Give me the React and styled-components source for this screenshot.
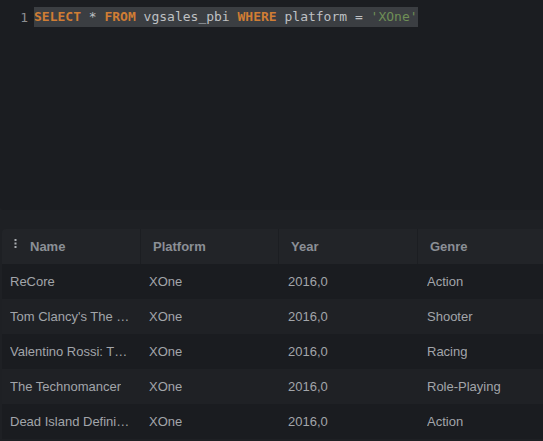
import React from 'react';
import styled, { createGlobalStyle } from 'styled-components';

const rows = [
  { name: 'ReCore', platform: 'XOne', year: '2016,0', genre: 'Action' },
  { name: "Tom Clancy's The Division", platform: 'XOne', year: '2016,0', genre: 'Shooter' },
  { name: 'Valentino Rossi: The Game', platform: 'XOne', year: '2016,0', genre: 'Racing' },
  { name: 'The Technomancer', platform: 'XOne', year: '2016,0', genre: 'Role-Playing' },
  { name: 'Dead Island Definitive Collection', platform: 'XOne', year: '2016,0', genre: 'Action' },
];

const GlobalStyle = createGlobalStyle`
  html, body {
    margin: 0;
    background: #1e2024;
    overflow: hidden;
  }
`;

const App = () => {
  return (
    <>
      <GlobalStyle />
      <Page>
        <Editor>
          <Line>
            <LineNo>1</LineNo>
            <Code>
              <Kw>SELECT</Kw> * <Kw>FROM</Kw> vgsales_pbi <Kw>WHERE</Kw> platform = <Str>'XOne'</Str>
            </Code>
          </Line>
        </Editor>
        <Results>
          <Table>
            <HeaderRow>
              <HeadCell $first>
                <Dots width="3" height="9" viewBox="0 0 3 9">
                  <rect x="0.5" y="0" width="2" height="2" fill="#a8abb0" />
                  <rect x="0.5" y="3.5" width="2" height="2" fill="#a8abb0" />
                  <rect x="0.5" y="7" width="2" height="2" fill="#a8abb0" />
                </Dots>
                Name
              </HeadCell>
              <HeadCell>Platform</HeadCell>
              <HeadCell>Year</HeadCell>
              <HeadCell $last>Genre</HeadCell>
            </HeaderRow>
            {rows.map((r, i) => (
              <Row key={i} $odd={i % 2 === 1}>
                <Cell><Text>{r.name}</Text></Cell>
                <Cell><Text>{r.platform}</Text></Cell>
                <Cell $pad={9}><Text>{r.year}</Text></Cell>
                <Cell $pad={9}><Text>{r.genre}</Text></Cell>
              </Row>
            ))}
          </Table>
        </Results>
      </Page>
    </>
  );
};

const Page = styled.div`
  width: 543px;
  height: 441px;
  display: flex;
  flex-direction: column;
  background: #1e2024;
`;

const Editor = styled.div`
  height: 203px;
  padding-top: 7px;
  background: #1b1d21;
  border-bottom-left-radius: 4px;
  font-family: 'DejaVu Sans Mono', monospace;
  font-size: 13px;
`;

const Line = styled.div`
  display: flex;
  align-items: center;
  height: 20px;
`;

const LineNo = styled.span`
  width: 28px;
  text-align: right;
  padding-right: 6px;
  color: #8b8d91;
`;

const Code = styled.span`
  background: #3b3e42;
  color: #bfc1c4;
  line-height: 20px;
  white-space: pre;
`;

const Kw = styled.span`
  color: #d07d34;
  font-weight: bold;
`;

const Str = styled.span`
  color: #6f8f56;
`;

const Results = styled.div`
  flex: 1;
  padding: 19px 0 0 2px;
`;

const Table = styled.div`
  font-family: 'Liberation Sans', Arial, sans-serif;
  font-size: 13px;
`;

const grid = `
  display: grid;
  grid-template-columns: 139px 138px 139px 1fr;
  height: 35px;
`;

const HeaderRow = styled.div`
  ${grid}
  background: #222428;
  border-top-left-radius: 4px;
`;

const HeadCell = styled.div`
  display: flex;
  align-items: center;
  gap: 13px;
  padding-left: 12px;
  color: #8b8f96;
  font-weight: bold;
  border-right: ${p => (p.$last ? 'none' : '1px solid #1c1e22')};
`;

const Dots = styled.svg`
  flex-shrink: 0;
  margin-top: -6px;
`;

const Row = styled.div`
  ${grid}
  background: ${p => (p.$odd ? '#1f2125' : '#1a1c20')};
`;

const Cell = styled.div`
  display: flex;
  align-items: center;
  padding: 0 10px 0 ${p => p.$pad || 8}px;
  color: #a2a5aa;
  min-width: 0;
`;

const Text = styled.span`
  display: block;
  white-space: nowrap;
  overflow: hidden;
  text-overflow: ellipsis;
`;

export default App;
